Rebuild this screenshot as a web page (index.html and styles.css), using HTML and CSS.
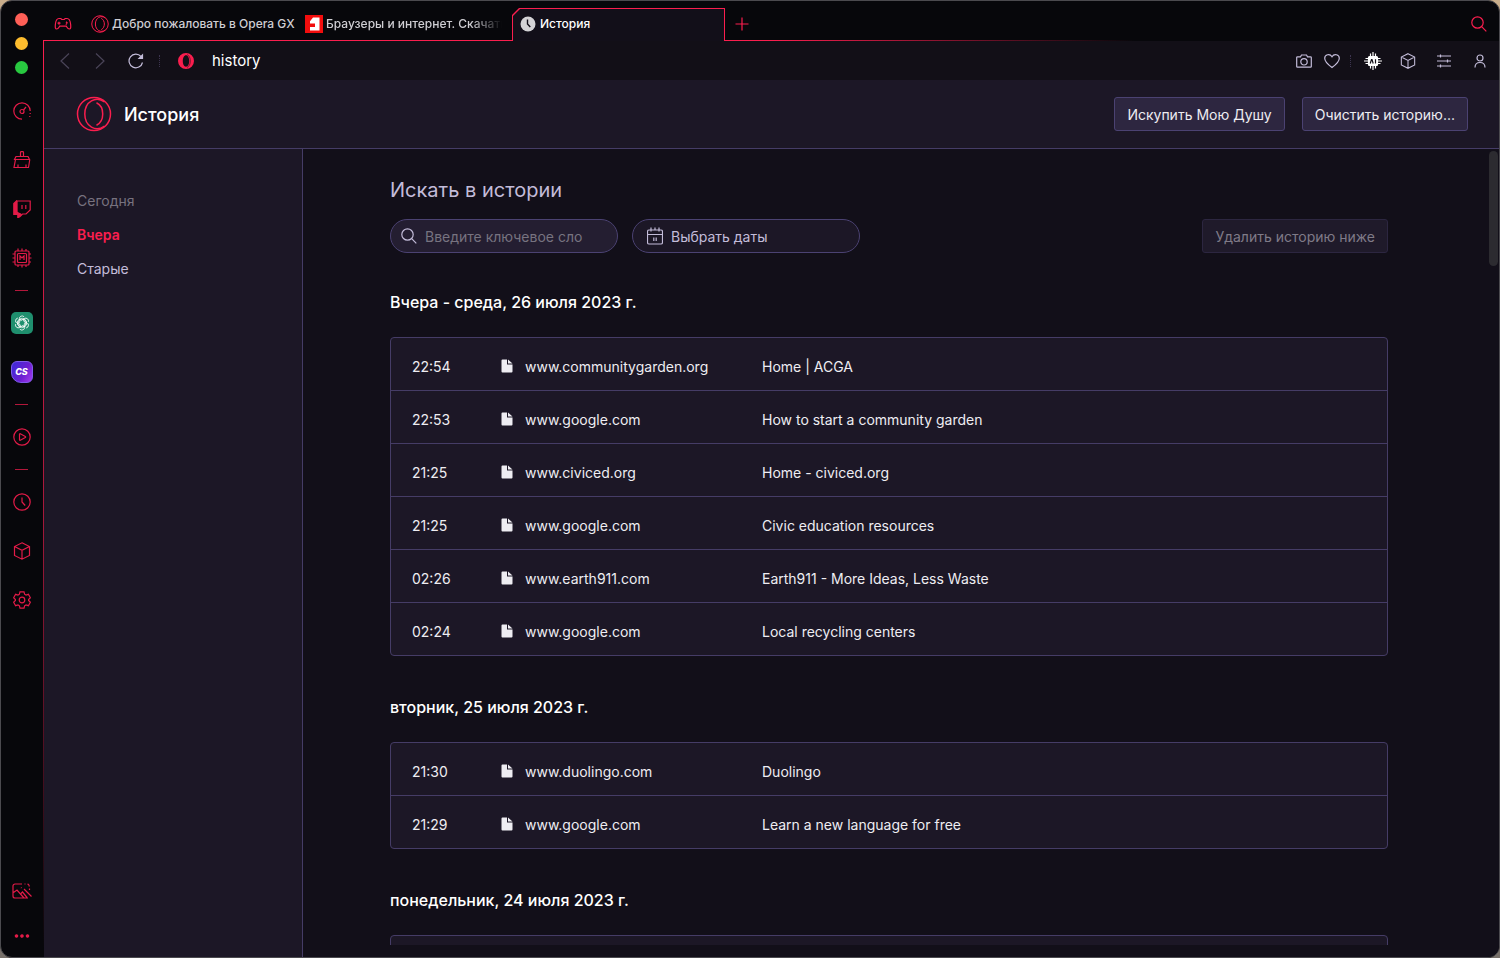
FILE: index.html
```
<!DOCTYPE html>
<html lang="ru">
<head>
  <meta charset="UTF-8" />
  <meta name="viewport" content="width=device-width, initial-scale=1.0"/>
  <title>История</title>
  <link rel="stylesheet" href="styles.css">
</head>
<body>

  <svg class="defs" aria-hidden="true">
    <symbol id="ring" viewBox="0 0 36 36">
      <circle cx="18" cy="18" r="16.500"/>
      <path d="M28.500 6C20-.5 8.800 5.500 8.800 18S20 36.500 28.500 30"/>
      <path d="M20.500 6.800c8.300 4 8.300 18.400 0 22.400"/>
    </symbol>
    <symbol id="cube" viewBox="0 0 18 18">
      <path d="M9 .8l7.500 3.700v9L9 17.200 1.500 13.500v-9zM1.500 4.500L9 8.300l7.500-3.800M9 8.300v8.900"/>
    </symbol>
    <symbol id="lens" viewBox="0 0 16 16">
      <circle cx="6.500" cy="6.500" r="5.700"/>
      <path d="M10.700 10.700l4.600 4.600"/>
    </symbol>
    <symbol id="file" viewBox="0 0 12 14">
      <path d="M1.500.5H6v5h5.500v7a1 1 0 0 1-1 1h-9a1 1 0 0 1-1-1v-11a1 1 0 0 1 1-1zM7 .5l4.500 4H7z"/>
    </symbol>
  </svg>

  <div class="window">
    <aside class="sidebar">
      <div class="lights">
        <button class="light close" aria-label="Закрыть"></button>
        <button class="light minimize" aria-label="Свернуть"></button>
        <button class="light expand" aria-label="Развернуть"></button>
      </div>

      <div class="tools">
        <button class="tool" aria-label="GX Control">
          <svg class="icon" viewBox="0 0 18 18"><path d="M9 17.200A8.200 8.200 0 1 1 17.200 9"/><circle cx="9" cy="9.500" r="2"/><path d="M10.500 8l2.500-3"/><path d="M17.200 11v1M16.800 14v1"/></svg>
        </button>
        <button class="tool" aria-label="GX Cleaner">
          <svg class="icon" viewBox="0 0 18 18"><path d="M7.500 5.500v-4a.8.8 0 0 1 .8-.8h1.400a.8.8 0 0 1 .8.8v4M3 5.500h12l1.500 3h-15zM2.500 8.500L1 16.500h14.500l1.300-8M5 16.500v-3M13 16.500v-3"/></svg>
        </button>
        <button class="tool" aria-label="Twitch">
          <svg class="icon" viewBox="0 0 18 18"><path class="solid" d="M3.500 1L.8 3.500v11h4V18l3.500-3.500L3.500 12z"/><path d="M4 1h13.200v9l-4.200 4H9.500l-2.500 2.500V14H4zM9 5v4M12.800 5v4"/></svg>
        </button>
        <button class="tool" aria-label="Моды">
          <svg class="icon wide" viewBox="0 0 20 20"><rect x="3" y="3" width="14" height="14" rx="1"/><rect x="5.500" y="5.500" width="9" height="9" rx="1"/><path d="M8 12V8l2 2 2-2v4M6 3V.5M10 3V.5M14 3V1M6 17v2M10 17v2.500M14 17v2M3 6H.5M3 10H.5M3 14H.5M17 6h2M17 10h2.500M17 14h2"/></svg>
        </button>
      </div>

      <hr class="dash">

      <div class="tools apps">
        <button class="tool" aria-label="ChatGPT">
          <svg class="app" viewBox="0 0 22 22"><rect width="22" height="22" rx="5" fill="#1f8f6e"/><g fill="none" stroke="#fff" stroke-width=".8"><path id="petal" d="M8.300 11.500V6.800a2.800 2.800 0 0 1 4.900-1.900M8.300 8.200L11.500 6.300l3.300 1.900"/><use href="#petal" transform="rotate(60 11 11)"/><use href="#petal" transform="rotate(120 11 11)"/><use href="#petal" transform="rotate(180 11 11)"/><use href="#petal" transform="rotate(240 11 11)"/><use href="#petal" transform="rotate(300 11 11)"/></g></svg>
        </button>
        <button class="tool" aria-label="ChatSonic">
          <span class="chatsonic">CS</span>
        </button>
      </div>

      <hr class="dash">

      <button class="tool" aria-label="Плеер">
        <svg class="icon" viewBox="0 0 18 18"><circle cx="9" cy="9" r="8.200"/><path d="M6.500 6.200v5.600a.6.6 0 0 0 .8.500l5-2.700a.7.7 0 0 0 0-1.200l-5-2.700a.6.6 0 0 0-.8.500z"/></svg>
      </button>

      <hr class="dash">

      <div class="tools">
        <button class="tool" aria-label="История">
          <svg class="icon" viewBox="0 0 18 18"><circle cx="9" cy="9" r="8.200"/><path d="M9 4.500V9l3.200 3.500"/></svg>
        </button>
        <button class="tool" aria-label="Расширения">
          <svg class="icon"><use href="#cube"/></svg>
        </button>
        <button class="tool" aria-label="Настройки">
          <svg class="icon" viewBox="0 0 18 18"><circle cx="9" cy="9" r="2.800"/><path d="M7 .8h4l.6 2.400 1.400.8 2.400-.7 2 3.500-1.800 1.700v1l1.800 1.700-2 3.500-2.400-.7-1.400.8-.6 2.400H7l-.6-2.400L5 14l-2.400.7-2-3.500 1.800-1.700v-1L.6 6.800l2-3.500L5 4l1.400-.8z"/></svg>
        </button>
      </div>

      <div class="tools bottom">
        <button class="tool" aria-label="Обои">
          <svg class="icon wide" viewBox="0 0 20 18"><path d="M10 2H3a2 2 0 0 0-2 2v10a2 2 0 0 0 2 2h13M12.500 2h1M15.500 2.200a2 2 0 0 1 1.700 2.300M17.500 6.500V8M1.500 10.500L5 8l7 8M9 11.500l1.500-1.500 4.500 5.500M12 7l7.500 7.500M9 5.500l.5.500"/></svg>
        </button>
        <button class="tool" aria-label="Ещё">
          <svg class="icon" viewBox="0 0 18 18"><g class="solid"><circle cx="3.500" cy="9" r="1.200"/><circle cx="9" cy="9" r="1.200"/><circle cx="14.500" cy="9" r="1.200"/></g></svg>
        </button>
      </div>
    </aside>

    <div class="browser">
      <div class="tabbar">
        <button class="corner" aria-label="GX Corner">
          <svg class="icon" viewBox="0 0 18 14"><path d="M5 1.500h1.800l1 1h2.400l1-1H13c2.500 0 3.200 2 3.600 5.500.4 3.500.2 5-1.300 5s-2-1.300-3-2.800H5.700C4.700 10.700 4.200 12 2.700 12s-1.700-1.500-1.300-5C1.800 3.500 2.500 1.500 5 1.500z"/><path d="M5 4.700v3M3.500 6.200h3M12 4.800l1.500 1.400M11.800 7.600l1.200-1.200"/></svg>
        </button>
        <a class="tab first" href="#">
          <svg class="favicon"><use href="#ring"/></svg>
          <span>Добро пожаловать в Opera GX</span>
        </a>
        <a class="tab second" href="#">
          <svg class="favicon" viewBox="0 0 18 18"><rect width="18" height="18" fill="#f20d0d"/><path d="M8 2.500h6.500v13H5v-3.500h5V8.500H5V6.200z" fill="#fff"/></svg>
          <span class="fade">Браузеры и интернет. Скачать</span>
        </a>
        <a class="tab-active" href="#">
          <span class="tab-inner">
            <svg class="clock" viewBox="0 0 16 16"><circle cx="8" cy="8" r="7.500" fill="#d4d3d6"/><path d="M7.500 3.500V8l2.800 3" fill="none" stroke="#120f19" stroke-width="1.400"/></svg>
            <span>История</span>
          </span>
        </a>
        <button class="new-tab" aria-label="Новая вкладка">
          <svg class="icon" viewBox="0 0 14 14"><path d="M7 .5v13M.5 7h13"/></svg>
        </button>
        <button class="tab-search" aria-label="Поиск вкладок">
          <svg class="icon"><use href="#lens"/></svg>
        </button>
      </div>

      <div class="addressbar">
        <button class="nav-btn dim" aria-label="Назад"><svg class="icon" viewBox="0 0 16 16"><path d="M12 .5L4 8l8 7.500"/></svg></button>
        <button class="nav-btn dim" aria-label="Вперёд"><svg class="icon" viewBox="0 0 16 16"><path d="M4 .5L12 8l-8 7.500"/></svg></button>
        <button class="nav-btn reload" aria-label="Обновить"><svg class="icon" viewBox="0 0 16 16"><path d="M14.500 9.500A6.800 6.800 0 1 1 13 3.500"/><path class="solid" d="M14.500 2v3.500H11z"/></svg></button>
        <span class="dots"></span>
        <svg class="opera" viewBox="0 0 16 16"><path fill-rule="evenodd" d="M8 0a8 8 0 1 0 0 16A8 8 0 0 0 8 0zm0 2.300c1.900 0 3.200 2.500 3.200 5.700S9.900 13.700 8 13.700 4.800 11.200 4.800 8 6.100 2.300 8 2.300z"/><path class="cut" d="M9 1.500c4.500 2 4.500 11 0 13"/></svg>
        <span class="url">history</span>

        <div class="actions">
          <button class="nav-btn" aria-label="Снимок"><svg class="icon" viewBox="0 0 16 16"><path d="M1.500 3.800h3L5.500 2h5l1 1.800h3a.8.8 0 0 1 .8.800v8.800a.8.8 0 0 1-.8.800h-13a.8.8 0 0 1-.8-.8V4.600a.8.8 0 0 1 .8-.8z"/><circle cx="8" cy="8.800" r="3.200"/></svg></button>
          <button class="nav-btn heart" aria-label="В закладки"><svg class="icon" viewBox="0 0 16 16"><path d="M8 14.500C4.500 12 .7 9 .7 5.300.7 1.500 5.800.2 8 3.800c2.200-3.600 7.300-2.300 7.300 1.500C15.300 9 11.500 12 8 14.500z"/></svg></button>
          <span class="dots"></span>
          <button class="nav-btn ai" aria-label="AI"><svg class="icon" viewBox="0 0 18 18"><rect class="solid" x="4.500" y="4.500" width="9" height="9" rx="1"/><path d="M6.500 1.500V4M9 0v4M11.500 1.500V4M6.500 14v2.500M9 14v4M11.500 14v2.500M1.500 6.500H4M0 9h4M1.500 11.500H4M14 6.500h2.500M14 9h4M14 11.500h2.500"/><path class="ai-mark" d="M6.200 11.500l1.300-4h.5l1.200 4M11.500 7.200v4.300"/></svg></button>
          <button class="nav-btn cube" aria-label="Расширения"><svg class="icon"><use href="#cube"/></svg></button>
          <button class="nav-btn" aria-label="Быстрые настройки"><svg class="icon" viewBox="0 0 16 16"><path d="M1 3h14M1 8h14M1 13h14M4.500 1.500v3M11.500 6.500v3M4.500 11.500v3"/></svg></button>
          <button class="nav-btn" aria-label="Профиль"><svg class="icon" viewBox="0 0 16 16"><circle cx="8" cy="5" r="3"/><path d="M3 14.500c0-3.200 2-5 5-5s5 1.800 5 5"/></svg></button>
        </div>
      </div>

      <header class="header">
        <svg class="logo"><use href="#ring"/></svg>
        <h1>История</h1>
        <button class="btn">Искупить Мою Душу</button>
        <button class="btn">Очистить историю...</button>
      </header>

      <div class="content">
        <nav class="menu">
          <a href="#" class="muted">Сегодня</a>
          <a href="#" class="current">Вчера</a>
          <a href="#">Старые</a>
        </nav>

        <main class="history">
          <h2>Искать в истории</h2>
          <div class="filters">
            <label class="pill search">
              <svg class="icon"><use href="#lens"/></svg>
              <input type="text" placeholder="Введите ключевое сло" aria-label="Искать в истории"/>
            </label>
            <button class="pill dates">
              <svg class="icon" viewBox="0 0 16 18"><rect x=".5" y="3" width="15" height="14" rx="1.500"/><path d="M.5 7.500h15M4 .5v4M12 .5v4M8 .5v2.500M6.800 10.500V14M9.200 10.500V14"/></svg>
              Выбрать даты
            </button>
            <button class="btn" disabled>Удалить историю ниже</button>
          </div>

          <h3>Вчера - среда, 26 июля 2023 г.</h3>
          <table>
            <tr><td class="time">22:54</td><td class="site"><svg><use href="#file"/></svg>www.communitygarden.org</td><td>Home | ACGA</td></tr>
            <tr><td class="time">22:53</td><td class="site"><svg><use href="#file"/></svg>www.google.com</td><td>How to start a community garden</td></tr>
            <tr><td class="time">21:25</td><td class="site"><svg><use href="#file"/></svg>www.civiced.org</td><td>Home - civiced.org</td></tr>
            <tr><td class="time">21:25</td><td class="site"><svg><use href="#file"/></svg>www.google.com</td><td>Civic education resources</td></tr>
            <tr><td class="time">02:26</td><td class="site"><svg><use href="#file"/></svg>www.earth911.com</td><td>Earth911 - More Ideas, Less Waste</td></tr>
            <tr><td class="time">02:24</td><td class="site"><svg><use href="#file"/></svg>www.google.com</td><td>Local recycling centers</td></tr>
          </table>

          <h3>вторник, 25 июля 2023 г.</h3>
          <table>
            <tr><td class="time">21:30</td><td class="site"><svg><use href="#file"/></svg>www.duolingo.com</td><td>Duolingo</td></tr>
            <tr><td class="time">21:29</td><td class="site"><svg><use href="#file"/></svg>www.google.com</td><td>Learn a new language for free</td></tr>
          </table>

          <h3>понедельник, 24 июля 2023 г.</h3>
          <table>
            <tr><td class="time"></td><td class="site"></td><td></td></tr>
          </table>
        </main>

        <div class="scrollbar"><div class="thumb"></div></div>
      </div>
    </div>
  </div>

</body>
</html>
```
FILE: styles.css
```
* {
  box-sizing: border-box;
  margin: 0;
  padding: 0;
}

body {
  font-family: Inter, 'Liberation Sans', sans-serif;
  font-size: 14px;
  color: #eeedf2;
  background: linear-gradient(#c9ad8b, #77706a);
  height: 100vh;
  overflow: hidden;
}

button {
  font: inherit;
  color: inherit;
  background: none;
  border: none;
  cursor: pointer;
}

a {
  color: inherit;
  text-decoration: none;
}

svg {
  display: block;
  flex: none;
}

.defs {
  display: none;
}

.icon {
  width: 18px;
  height: 18px;
  fill: none;
  stroke: currentColor;
  stroke-width: 1.2;
}

.solid {
  fill: currentColor;
}

.window {
  display: flex;
  height: 100vh;
  background: #07070b;
  border: 1px solid #4b4a4f;
  border-radius: 12px;
  overflow: hidden;
}

/* sidebar */
.sidebar {
  display: flex;
  flex-direction: column;
  align-items: center;
  width: 42px;
  padding: 12px 1px 9px 0;
  color: #e31b48;
}

.lights {
  display: flex;
  flex-direction: column;
  gap: 11px;
  margin-bottom: 25px;
}

.light {
  width: 13px;
  height: 13px;
  border-radius: 50%;
}

.close {
  background: #ff5f57;
}

.minimize {
  background: #febc2e;
}

.expand {
  background: #28c840;
}

.tools {
  display: flex;
  flex-direction: column;
  gap: 25px;
}

.tool {
  display: flex;
  align-items: center;
  justify-content: center;
  width: 24px;
  height: 24px;
}

.wide {
  width: 20px;
  height: 20px;
}

.dash {
  width: 13px;
  border: none;
  border-top: 1px solid #b3173b;
  margin: 20px 0;
}

.app {
  width: 22px;
  height: 22px;
}

.chatsonic {
  width: 22px;
  height: 22px;
  border-radius: 6px 6px 6px 10px;
  border: 1px solid #7f5bea;
  background: linear-gradient(120deg, #3b2bd8, #6d1fd0 60%, #a63df0);
  color: #fff;
  font-size: 9px;
  font-style: italic;
  font-weight: 800;
  line-height: 20px;
}

.bottom {
  gap: 21px;
  margin-top: auto;
}

/* browser */
.browser {
  flex: 1;
  min-width: 0;
  display: flex;
  flex-direction: column;
  background: linear-gradient(#fa1e4e, #a5183a 50%, #07070b 95%) 0 39px / 1px 100% no-repeat;
  padding-left: 1px;
}

.tabbar {
  display: flex;
  align-items: flex-end;
  height: 40px;
  padding-right: 12px;
  font-size: 12px;
  font-weight: 500;
  color: #cfced3;
  background: linear-gradient(90deg, #fa1e4e 50%, #07070b 75%) bottom / 100% 1px no-repeat;
}

.tabbar button {
  display: flex;
  align-items: center;
  height: 33px;
  padding-bottom: 2px;
  color: #fa1e4e;
}

.corner {
  margin-left: 10px;
}

.tab {
  display: flex;
  align-items: center;
  gap: 3px;
  height: 33px;
  padding-bottom: 2px;
  white-space: nowrap;
}

.first {
  width: 233px;
  padding-left: 19px;
}

.second {
  width: 207px;
}

.favicon {
  width: 18px;
  height: 18px;
}

.favicon use,
.logo {
  fill: none;
  stroke: #fa1e4e;
}

.favicon use {
  stroke-width: 2;
}

.fade {
  width: 176px;
  overflow: hidden;
  mask-image: linear-gradient(90deg, #000 82%, transparent);
}

.tab-active {
  width: 213px;
  height: 33px;
  padding: 1px 1px 0;
  background: #fa1e4e;
  clip-path: polygon(0 7px, 7px 0, 100% 0, 100% 100%, 0 100%);
  color: #fff;
}

.tab-inner {
  display: flex;
  align-items: center;
  gap: 4px;
  height: 32px;
  padding: 0 0 3px 7px;
  background: #120f19;
  clip-path: polygon(0 7px, 7px 0, 100% 0, 100% 100%, 0 100%);
}

.clock {
  width: 16px;
  height: 16px;
}

.new-tab {
  margin-left: 10px;
}

.new-tab .icon {
  width: 14px;
  height: 14px;
}

.tab-search {
  margin-left: auto;
}

.tab-search .icon {
  width: 16px;
  height: 16px;
}

.addressbar {
  display: flex;
  align-items: center;
  height: 39px;
  padding: 0 11px 0 13px;
  background: #120f17;
  color: #c3bcd9;
}

.nav-btn {
  display: flex;
  margin-right: 19px;
}

.nav-btn .icon {
  width: 16px;
  height: 16px;
}

.dim {
  color: #4a4458;
}

.reload {
  margin: 0 15px 0 1px;
}

.dots {
  width: 1px;
  height: 12px;
  border-left: 1px dotted #3c344f;
}

.opera {
  width: 16px;
  height: 16px;
  margin: 0 18px;
  fill: #fa1e4e;
}

.cut {
  fill: none;
  stroke: #120f17;
  stroke-width: 0.5;
}

.url {
  font-size: 15px;
  color: #fff;
}

.actions {
  display: flex;
  align-items: center;
  margin-left: auto;
}

.actions .nav-btn {
  margin: 0 0 0 20px;
}

.actions .heart {
  margin: 0 10px 0 12px;
}

.actions .ai {
  margin-left: 13px;
  color: #fff;
}

.actions .cube {
  margin-left: 18px;
}

.ai .icon {
  width: 18px;
  height: 18px;
}

.ai-mark {
  stroke: #120f17;
}

/* page */
.header {
  display: flex;
  align-items: center;
  height: 69px;
  padding: 0 31px 0 32px;
  background: #1c1726;
  border-bottom: 1px solid #453c66;
}

.logo {
  width: 36px;
  height: 36px;
  stroke-width: 1.5;
}

h1 {
  flex: 1;
  margin-left: 12px;
  font-size: 18px;
  font-weight: 500;
  color: #fff;
}

.btn {
  height: 34px;
  padding: 0 12px;
  background: #2d2640;
  border: 1px solid #4b4272;
  border-radius: 3px;
}

.btn + .btn {
  margin-left: 17px;
}

.btn:disabled {
  margin-left: auto;
  color: #7f7b88;
  background: #1f1a2a;
  border-color: #2c2640;
  cursor: default;
}

.content {
  flex: 1;
  display: flex;
  min-height: 0;
  background: #120f19;
}

.menu {
  display: flex;
  flex-direction: column;
  gap: 14px;
  width: 259px;
  padding: 42px 33px;
  line-height: 20px;
  color: #c3bcd9;
  background: #1c1726;
  border-right: 1px solid #453c66;
}

.muted {
  color: #77727f;
}

.current {
  color: #fa1e4e;
  font-weight: 600;
}

.history {
  flex: 1;
  min-width: 0;
  margin-bottom: 12px;
  padding: 28px 101px 0 87px;
  overflow: hidden;
}

h2 {
  font-size: 20px;
  font-weight: 400;
  line-height: 26px;
  color: #c3bcd9;
}

.filters {
  display: flex;
  gap: 14px;
  margin-top: 16px;
}

.pill {
  display: flex;
  align-items: center;
  width: 228px;
  height: 34px;
  border: 1px solid #4b4272;
  border-radius: 17px;
  color: #c3bcd9;
}

.search {
  gap: 8px;
  padding: 0 33px 0 10px;
  background: #241e31;
}

.search .icon,
.dates .icon {
  width: 16px;
}

.search input {
  flex: 1;
  min-width: 0;
  font: inherit;
  color: #fff;
  background: none;
  border: none;
  outline: none;
}

.search input::placeholder {
  color: #777380;
}

.dates {
  gap: 8px;
  padding: 0 14px;
  background: #1c1726;
}

h3 {
  margin: 38px 0 24px;
  font-size: 16px;
  font-weight: 500;
  line-height: 22px;
  color: #fff;
}

table {
  width: 100%;
  table-layout: fixed;
  border: 1px solid #453c66;
  border-radius: 4px;
  border-spacing: 0;
  background: #1c1726;
}

table + h3 {
  margin-top: 40px;
}

td {
  height: 53px;
  padding-top: 4px;
  border-bottom: 1px solid #453c66;
}

tr:last-child td {
  height: 52px;
  border-bottom: none;
}

.time {
  width: 110px;
  padding-left: 21px;
}

.site {
  width: 261px;
}

.site svg {
  display: inline-block;
  width: 12px;
  height: 14px;
  margin-right: 12px;
  fill: #eeedf2;
  vertical-align: -1px;
}

.scrollbar {
  width: 10px;
  padding-top: 2px;
}

.thumb {
  width: 9px;
  height: 115px;
  border-radius: 5px;
  background: #2c2b30;
}
```
